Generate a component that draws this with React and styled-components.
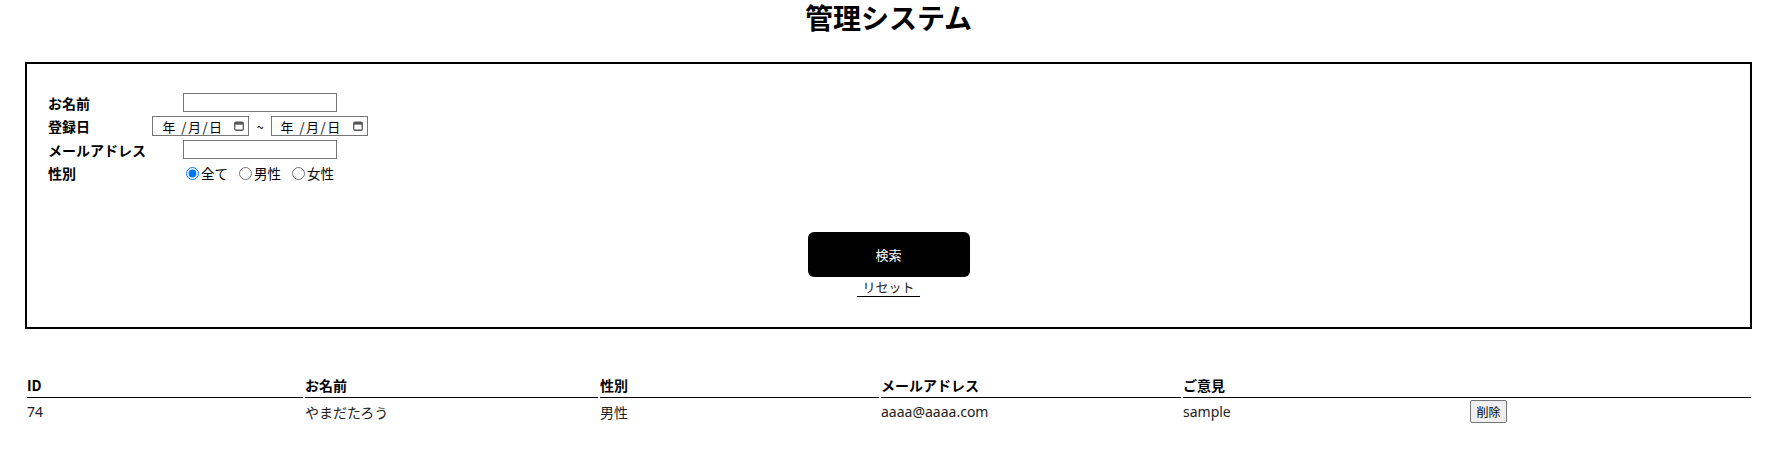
import React from "react";
import styled, { createGlobalStyle } from "styled-components";

const GlobalStyle = createGlobalStyle`
  html, body { margin: 0; padding: 0; background: #fff; }
  body {
    font-family: "Noto Sans", "Noto Sans CJK JP", sans-serif;
    color: #000;
  }
`;

const Page = styled.div`
  padding: 0 23px 40px 25px;
`;

const Title = styled.h1`
  margin: 0;
  font-size: 28px;
  line-height: 34px;
  font-weight: 700;
  text-align: center;
  font-family: "Noto Sans CJK JP", sans-serif;
`;

const SearchPanel = styled.section`
  margin-top: 28px;
  border: 2px solid #000;
  padding: 27px 21px 30px;
`;

const FormGrid = styled.div`
  display: grid;
  grid-template-columns: 102px 220px;
  grid-auto-rows: 23.5px;
  align-items: center;
`;

const Label = styled.div`
  font-size: 14px;
  font-weight: 700;
  font-family: "Noto Sans CJK JP", sans-serif;
  white-space: nowrap;
`;

const Field = styled.div`
  display: flex;
  justify-content: center;
  align-items: center;
  font-size: 13px;
  font-family: "Noto Sans CJK JP", sans-serif;
`;

const TextInput = styled.input`
  box-sizing: border-box;
  width: 154px;
  height: 19px;
  border: 1px solid #767676;
  padding: 1px 3px;
  font-size: 13px;
  outline: none;
`;

const DateBox = styled.div`
  box-sizing: border-box;
  width: 97px;
  height: 20px;
  border: 1px solid #767676;
  display: flex;
  align-items: center;
  justify-content: space-between;
  padding: 0 4px 0 9px;
  font-size: 13px;
  letter-spacing: 1.5px;
  color: #000;
  white-space: pre;
`;

const Tilde = styled.span`
  padding: 0 7px;
  font-size: 13px;
`;

const RadioGroup = styled.div`
  display: flex;
  align-items: center;
  gap: 11px;
`;

const RadioOption = styled.label`
  display: flex;
  align-items: center;
  font-size: 13.5px;
  line-height: 16px;
`;

const Radio = styled.input`
  width: 13px;
  height: 13px;
  margin: 0 2px 0 0;
`;

const Actions = styled.div`
  margin-top: 47px;
  display: flex;
  flex-direction: column;
  align-items: center;
`;

const SearchButton = styled.button`
  width: 162px;
  height: 45px;
  border: none;
  border-radius: 6px;
  background: #000;
  color: #fff;
  font-size: 13px;
  font-family: "Noto Sans CJK JP", sans-serif;
  cursor: pointer;
`;

const ResetLink = styled.a`
  margin-top: 1px;
  padding: 0 5px;
  font-size: 13px;
  line-height: 18px;
  color: #222;
  text-decoration: none;
  border-bottom: 1px solid #000;
  font-family: "Noto Sans CJK JP", sans-serif;
  cursor: pointer;
`;

const Table = styled.table`
  margin-top: 42px;
  width: 100%;
  table-layout: fixed;
  border-spacing: 2px;
  font-family: "Noto Sans", "Noto Sans CJK JP", sans-serif;
`;

const Th = styled.th`
  text-align: left;
  font-size: 14px;
  font-weight: 700;
  line-height: 20px;
  padding: 2px 0;
  border-bottom: 1px solid #000;
  font-family: "Noto Sans CJK JP", sans-serif;
`;

const Td = styled.td`
  font-size: 14px;
  line-height: 20px;
  height: 23px;
  padding: 0;
  color: #222;
  vertical-align: middle;
  font-family: ${(p) => (p.$jp ? '"Noto Sans CJK JP", sans-serif' : '"Noto Sans", "Noto Sans CJK JP", sans-serif')};
`;

const DeleteButton = styled.button`
  box-sizing: border-box;
  height: 23px;
  width: 37px;
  padding: 0;
  background: #efefef;
  border: 1px solid #767676;
  border-radius: 2px;
  font-size: 12px;
  font-family: "Noto Sans CJK JP", sans-serif;
  color: #000;
`;

const CalendarIcon = () => (
  <svg width="10" height="10" viewBox="0 0 10 10" aria-hidden="true">
    <rect x="0.75" y="1.25" width="8.5" height="8" rx="1.2" fill="none" stroke="#555" strokeWidth="1.3" />
    <rect x="0.75" y="1.25" width="8.5" height="2.4" fill="#555" />
  </svg>
);

const DateField = () => (
  <DateBox>
    <span>年 /月/日</span>
    <CalendarIcon />
  </DateBox>
);

const columns = [276, 293, 279, 300, 285, 281];

export default function App() {
  return (
    <>
      <GlobalStyle />
      <Page>
        <Title>管理システム</Title>
        <SearchPanel>
          <FormGrid>
            <Label>お名前</Label>
            <Field>
              <TextInput type="text" />
            </Field>
            <Label>登録日</Label>
            <Field>
              <DateField />
              <Tilde>~</Tilde>
              <DateField />
            </Field>
            <Label>メールアドレス</Label>
            <Field>
              <TextInput type="text" />
            </Field>
            <Label>性別</Label>
            <Field>
              <RadioGroup>
                <RadioOption>
                  <Radio type="radio" name="gender" defaultChecked />
                  全て
                </RadioOption>
                <RadioOption>
                  <Radio type="radio" name="gender" />
                  男性
                </RadioOption>
                <RadioOption>
                  <Radio type="radio" name="gender" />
                  女性
                </RadioOption>
              </RadioGroup>
            </Field>
          </FormGrid>
          <Actions>
            <SearchButton>検索</SearchButton>
            <ResetLink>リセット</ResetLink>
          </Actions>
        </SearchPanel>
        <Table>
          <colgroup>
            {columns.map((w, i) => (
              <col key={i} style={{ width: w }} />
            ))}
          </colgroup>
          <thead>
            <tr>
              <Th>ID</Th>
              <Th>お名前</Th>
              <Th>性別</Th>
              <Th>メールアドレス</Th>
              <Th colSpan={2}>ご意見</Th>
            </tr>
          </thead>
          <tbody>
            <tr>
              <Td>74</Td>
              <Td $jp>やまだたろう</Td>
              <Td $jp>男性</Td>
              <Td>aaaa@aaaa.com</Td>
              <Td>sample</Td>
              <Td>
                <DeleteButton>削除</DeleteButton>
              </Td>
            </tr>
          </tbody>
        </Table>
      </Page>
    </>
  );
}
